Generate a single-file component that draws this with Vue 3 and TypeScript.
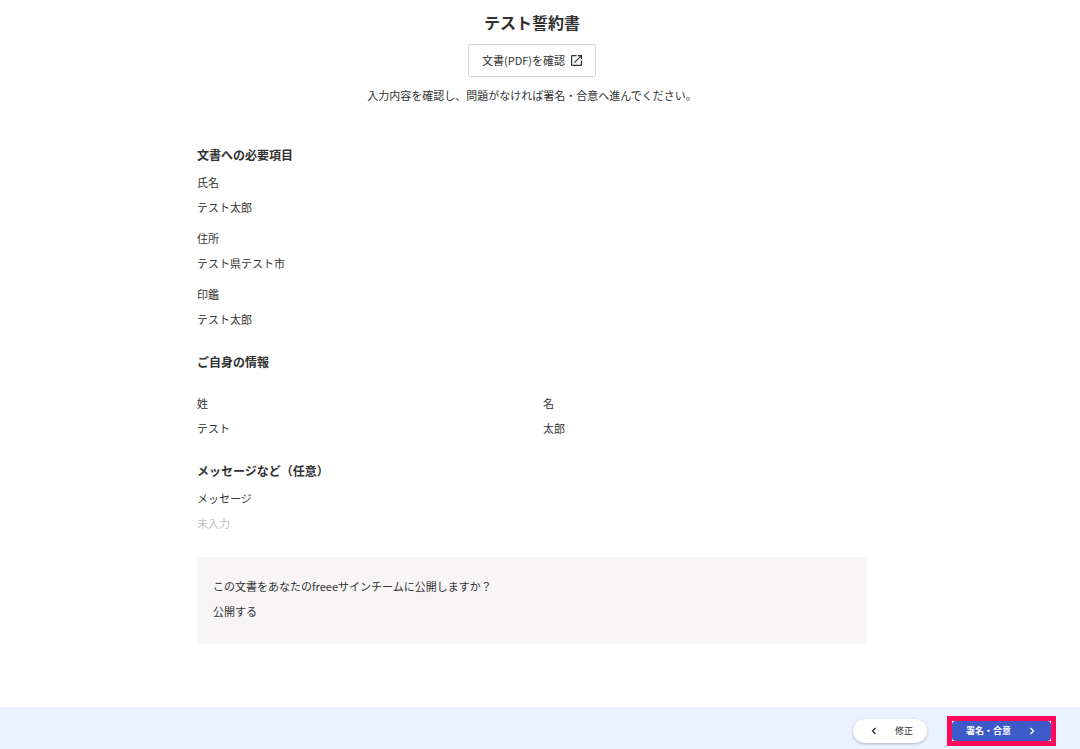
<script setup lang="ts">
interface Field {
  label: string
  value: string
}

const documentFields: Field[] = [
  { label: '氏名', value: 'テスト太郎' },
  { label: '住所', value: 'テスト県テスト市' },
  { label: '印鑑', value: 'テスト太郎' },
]

const nameFields: Field[] = [
  { label: '姓', value: 'テスト' },
  { label: '名', value: '太郎' },
]
</script>

<template>
  <div class="page">
    <main class="content">
      <header class="intro">
        <h1>テスト誓約書</h1>
        <button type="button" class="pdf-button">
          文書(PDF)を確認
          <svg class="open-icon" viewBox="3 3 18 18" aria-hidden="true">
            <path
              fill="currentColor"
              d="M19 19H5V5h7V3H5a2 2 0 0 0-2 2v14a2 2 0 0 0 2 2h14c1.1 0 2-.9 2-2v-7h-2v7zM14 3v2h3.59l-9.83 9.83 1.41 1.41L19 6.41V10h2V3h-7z"
            />
          </svg>
        </button>
        <p>入力内容を確認し、問題がなければ署名・合意へ進んでください。</p>
      </header>

      <section class="section">
        <h2>文書への必要項目</h2>
        <dl class="stack">
          <div v-for="field in documentFields" :key="field.label" class="field">
            <dt>{{ field.label }}</dt>
            <dd>{{ field.value }}</dd>
          </div>
        </dl>
      </section>

      <section class="section spaced">
        <h2>ご自身の情報</h2>
        <dl class="columns">
          <div v-for="field in nameFields" :key="field.label" class="field">
            <dt>{{ field.label }}</dt>
            <dd>{{ field.value }}</dd>
          </div>
        </dl>
      </section>

      <section class="section">
        <h2>メッセージなど（任意）</h2>
        <dl class="field">
          <dt>メッセージ</dt>
          <dd class="empty">未入力</dd>
        </dl>
      </section>

      <dl class="field share">
        <dt>この文書をあなたのfreeeサインチームに公開しますか？</dt>
        <dd>公開する</dd>
      </dl>
    </main>

    <footer class="actions">
      <button type="button" class="back">
        <svg class="chevron" viewBox="0 0 6 8" aria-hidden="true">
          <path d="M4.5 1 1.5 4l3 3" />
        </svg>
        修正
      </button>
      <div class="highlight">
        <button type="button" class="sign">
          署名・合意
          <svg class="chevron" viewBox="0 0 6 8" aria-hidden="true">
            <path d="m1.5 1 3 3-3 3" />
          </svg>
        </button>
      </div>
    </footer>
  </div>
</template>

<style>
body {
  margin: 0;
  background: #fff;
}
</style>

<style scoped>
.page {
  display: flex;
  flex-direction: column;
  min-height: 100vh;
  color: #323232;
  font-family: 'Noto Sans CJK JP', 'Noto Sans', sans-serif;
  font-size: 11px;
  line-height: 18px;
}

h1,
h2,
p,
dl,
dd {
  margin: 0;
}

button {
  font-family: inherit;
  color: inherit;
  cursor: pointer;
}

.content {
  display: flex;
  flex-direction: column;
  gap: 25px;
  box-sizing: border-box;
  width: 100%;
  max-width: 686px;
  margin: 0 auto;
  padding: 10px 16px 60px 0;
}

.intro {
  display: flex;
  flex-direction: column;
  align-items: center;
  gap: 9px;
  margin-bottom: 17px;
}

h1 {
  font-size: 16px;
  line-height: 25px;
  font-weight: 700;
}

.pdf-button {
  display: flex;
  align-items: center;
  gap: 6px;
  padding: 7px 13px;
  border: 1px solid #d7d2d2;
  border-radius: 2px;
  background: #fff;
  font-size: 11px;
  line-height: 17px;
}

.open-icon {
  width: 11px;
  height: 11px;
}

.section {
  display: flex;
  flex-direction: column;
  gap: 9px;
}

.spaced {
  gap: 23px;
}

h2 {
  font-size: 12px;
  line-height: 18px;
  font-weight: 700;
}

.stack {
  display: flex;
  flex-direction: column;
  gap: 13px;
}

.columns {
  display: grid;
  grid-template-columns: 1fr 1fr;
  gap: 22px;
}

.field {
  display: flex;
  flex-direction: column;
  gap: 7px;
}

.empty {
  color: #bfbfbf;
}

.share {
  padding: 20px 16px 24px;
  background: #f7f5f6;
}

.actions {
  display: flex;
  justify-content: flex-end;
  align-items: center;
  gap: 20px;
  margin-top: auto;
  padding: 9px 24px 3px;
  background: #ebf2ff;
}

.back,
.sign {
  display: flex;
  align-items: center;
  border: 0;
  font-size: 9px;
  line-height: 14px;
}

.back {
  gap: 18px;
  padding: 5px 14px 5px 18px;
  border-radius: 12px;
  background: #fff;
  box-shadow: 0 1px 3px rgba(0, 0, 0, 0.25);
}

.highlight {
  border: 5px solid #ff0a5a;
  background: #fff;
}

.sign {
  gap: 18px;
  padding: 3px 16px 3px 14px;
  border-radius: 4px;
  background: #3c5ac8;
  color: #fff;
  font-weight: 700;
}

.chevron {
  width: 6px;
  height: 8px;
  fill: none;
  stroke: currentColor;
  stroke-width: 1.4;
}
</style>
